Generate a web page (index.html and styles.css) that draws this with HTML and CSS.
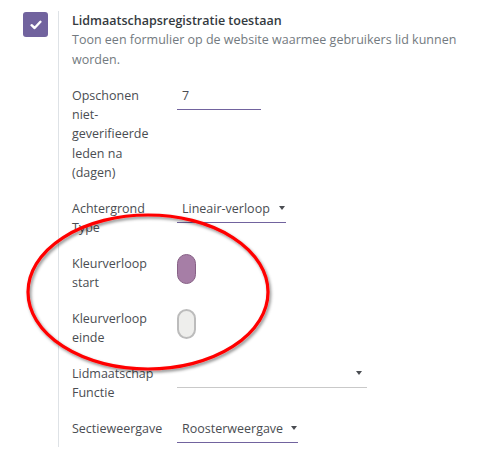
FILE: index.html
```html
<!DOCTYPE html>
<html>
<head>
<meta charset="utf-8">
<link rel="stylesheet" href="styles.css">
</head>
<body>
<div class="setting">
  <div class="check-col">
    <span class="checkbox">
      <svg width="12" height="10" viewBox="0 0 12 10"><path d="M1.6 5.2 L4.6 8 L10.4 1.8" fill="none" stroke="#fff" stroke-width="2.4" stroke-linecap="round" stroke-linejoin="round"/></svg>
    </span>
  </div>
  <div class="content">
    <div class="title">Lidmaatschapsregistratie toestaan</div>
    <div class="desc">Toon een formulier op de website waarmee gebruikers lid kunnen worden.</div>
    <div class="fields">
      <div class="field">
        <div class="lbl">Opschonen niet-geverifieerde leden na (dagen)</div>
        <div class="val"><span class="input active w-days">7</span></div>
      </div>
      <div class="field">
        <div class="lbl">Achtergrond Type</div>
        <div class="val"><span class="input active select w-type"><span>Lineair-verloop</span><i class="caret"></i></span></div>
      </div>
      <div class="field">
        <div class="lbl">Kleurverloop start</div>
        <div class="val"><span class="swatch swatch-start"></span></div>
      </div>
      <div class="field">
        <div class="lbl">Kleurverloop einde</div>
        <div class="val"><span class="swatch swatch-end"></span></div>
      </div>
      <div class="field">
        <div class="lbl">Lidmaatschap Functie</div>
        <div class="val"><span class="input select w-func"><span></span><i class="caret"></i></span></div>
      </div>
      <div class="field">
        <div class="lbl">Sectieweergave</div>
        <div class="val"><span class="input active select w-view"><span>Roosterweergave</span><i class="caret"></i></span></div>
      </div>
    </div>
  </div>
</div>
<svg class="annot" width="490" height="470" viewBox="0 0 490 470">
  <defs>
    <filter id="sh" x="-10%" y="-10%" width="120%" height="130%">
      <feDropShadow dx="1.5" dy="2" stdDeviation="1.5" flood-color="#000" flood-opacity="0.45"/>
    </filter>
  </defs>
  <ellipse cx="148" cy="292" rx="120" ry="77" fill="none" stroke="#ff0000" stroke-width="3.2" filter="url(#sh)"/>
</svg>
</body>
</html>
```

FILE: styles.css
```css
html, body {
  margin: 0;
  padding: 0;
  background: #fff;
}
body {
  width: 490px;
  height: 470px;
  position: relative;
  overflow: hidden;
  font-family: "Open Sans", "Liberation Sans", sans-serif;
  font-size: 12.5px;
  line-height: 19.25px;
  color: #4a4d52;
}
.setting {
  display: flex;
  padding-top: 11px;
}
.check-col {
  width: 58px;
  flex: none;
}
.checkbox {
  display: flex;
  align-items: center;
  justify-content: center;
  width: 25px;
  height: 25px;
  margin-left: 23px;
  margin-top: 1px;
  background: #71639e;
  border-radius: 3px;
}
.content {
  border-left: 1px solid #dee2e6;
  padding-left: 13px;
  padding-bottom: 4px;
  width: 400px;
}
.title {
  font-weight: 600;
  color: #343a40;
}
.desc {
  color: #737a80;
}
.fields {
  display: flex;
  flex-direction: column;
  gap: 16.6px;
  margin-top: 17px;
}
.field {
  display: grid;
  grid-template-columns: 105px 1fr;
}
.lbl {
  padding-right: 11px;
  color: #4a4d52;
}
.val {
  display: flex;
  align-items: flex-start;
}
.input {
  display: inline-flex;
  align-items: center;
  justify-content: space-between;
  box-sizing: border-box;
  padding: 0 0 4px 5px;
  border-bottom: 1px solid #c9c9c9;
  color: #4a4d52;
  min-height: 24px;
}
.input.active {
  border-bottom-color: #71639e;
}
.w-days { width: 84px; }
.w-type { width: 109px; }
.w-func { width: 190px; }
.w-view { width: 121px; }
.caret {
  width: 0;
  height: 0;
  border-left: 3.5px solid transparent;
  border-right: 3.5px solid transparent;
  border-top: 4px solid #4a4d52;
  margin-right: 1px;
  margin-top: -1px;
}
.w-func .caret {
  margin-right: 5px;
}
.swatch {
  display: block;
  box-sizing: border-box;
  width: 19px;
  height: 30px;
  border-radius: 10px;
}
.swatch-start {
  background: #a67ea6;
  border: 1.5px solid #876186;
}
.swatch-end {
  background: #eeeeec;
  border: 2px solid #bcbcbc;
}
.annot {
  position: absolute;
  left: 0;
  top: 0;
  pointer-events: none;
}
```
